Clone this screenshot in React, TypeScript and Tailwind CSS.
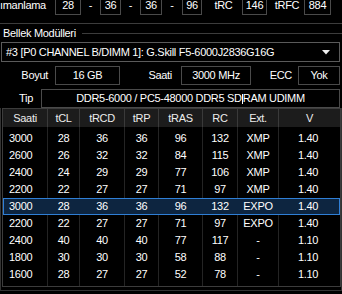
import React from "react";

const font = { fontFamily: '"Liberation Sans", Arial, sans-serif' };

function Box({ w, children, className = "" }: { w: string; children?: React.ReactNode; className?: string }) {
  return (
    <div className={`${w} border border-[#4a4a4a] flex items-center justify-center text-white ${className}`}>
      {children}
    </div>
  );
}

const cols = ["w-[45px]", "w-[32px]", "w-[45px]", "w-[34px]", "w-[44px]", "w-[35px]", "w-[41px]", "w-[61px]"];
const headers = ["Saati", "tCL", "tRCD", "tRP", "tRAS", "RC", "Ext.", "V"];
const rows: string[][] = [
  ["3000", "28", "36", "36", "96", "132", "XMP", "1.40"],
  ["2600", "26", "32", "32", "84", "115", "XMP", "1.40"],
  ["2400", "24", "29", "29", "77", "106", "XMP", "1.40"],
  ["2200", "22", "27", "27", "71", "97", "XMP", "1.40"],
  ["3000", "28", "36", "36", "96", "132", "EXPO", "1.40"],
  ["2200", "22", "27", "27", "71", "97", "EXPO", "1.40"],
  ["2400", "40", "40", "40", "77", "117", "-", "1.10"],
  ["1800", "30", "30", "30", "58", "88", "-", "1.10"],
  ["1600", "28", "27", "27", "52", "78", "-", "1.10"],
];

export default function App() {
  return (
    <div
      className="w-[342px] h-[294px] bg-black text-white text-[11px] leading-none tracking-[-0.3px] overflow-hidden"
      style={font}
    >
      {/* timing row */}
      <div className="-mt-[4px] h-[19px] flex">
        <div className="w-[55px] flex items-center">ımanlama</div>
        <Box w="w-[26px]">28</Box>
        <div className="w-[19px] flex items-center justify-center">-</div>
        <Box w="w-[21px]">36</Box>
        <div className="w-[19px] flex items-center justify-center">-</div>
        <Box w="w-[22px]">36</Box>
        <div className="w-[20px] flex items-center justify-center">-</div>
        <Box w="w-[20px]">96</Box>
        <div className="w-[40px] flex items-center justify-center pl-[3px]">tRC</div>
        <Box w="w-[25px]">146</Box>
        <div className="w-[37px] flex items-center justify-center pl-[3px]">tRFC</div>
        <Box w="w-[27px]">884</Box>
      </div>
      <div className="mt-[8px] h-px bg-[#3c3c3c]" />

      {/* group label */}
      <div className="h-[18px] flex items-center">
        <span className="pl-[3px]">Bellek Modülleri</span>
        <div className="flex-1 ml-[6px] h-px bg-[#3c3c3c]" />
      </div>

      {/* dropdown */}
      <div className="ml-[1px] w-[339px] h-[20px] border border-[#5a5a5a] flex items-center justify-between pl-[4px] pr-[9px]">
        <span>#3 [P0 CHANNEL B/DIMM 1]: G.Skill F5-6000J2836G16G</span>
        <svg width="8" height="5" viewBox="0 0 8 5">
          <polygon points="0,0 8,0 4,4.5" fill="#f0f0f0" />
        </svg>
      </div>

      {/* Boyut row */}
      <div className="mt-[4px] h-[19px] flex">
        <div className="w-[55px] flex items-center justify-end pr-[7px]">Boyut</div>
        <Box w="w-[65px]">16 GB</Box>
        <div className="w-[61px] flex items-center justify-end pr-[9px]">Saati</div>
        <Box w="w-[70px]">3000 MHz</Box>
        <div className="w-[47px] flex items-center justify-end pr-[6px]">ECC</div>
        <Box w="w-[42px]">Yok</Box>
      </div>

      {/* Tip row */}
      <div className="mt-[4px] h-[19px] flex">
        <div className="w-[41px] flex items-center justify-end pr-[8px]">Tip</div>
        <Box w="w-[299px]">
          <span className="flex items-center">
            DDR5-6000 / PC5-48000 DDR5 SD
            <span className="inline-block w-px h-[10px] bg-white" />
            RAM UDIMM
          </span>
        </Box>
      </div>

      {/* table frame */}
      <div className="w-[342px] border-x border-b border-[#333333] pb-[3px]">
        <div className="ml-[1px] w-[339px] border border-[#3c3c3c]">
          <div className="flex h-[18px] bg-[#1c1c1c]">
            {headers.map((h, i) => (
              <div
                key={h}
                className={`${cols[i]} flex items-center justify-center text-[#ececec] ${i < 7 ? "border-r border-[#3a3a3a]" : ""}`}
              >
                {h}
              </div>
            ))}
          </div>
          <div className="flex h-[3px]">
            {cols.map((c, i) => (
              <div key={i} className={`${c} ${i < 7 ? "border-r border-[#242424]" : ""}`} />
            ))}
          </div>
          {rows.map((r, ri) => {
            const sel = ri === 4;
            return (
              <div
                key={ri}
                className={`flex h-[17px] ${sel ? "bg-[#0d2540] outline outline-1 -outline-offset-1 outline-[#2f7fd6]" : ""}`}
              >
                {r.map((v, i) => (
                  <div
                    key={i}
                    className={`${cols[i]} flex items-center ${i === 0 ? "justify-start pl-[6px]" : "justify-center"} ${
                      i < 7 ? (sel ? "border-r border-transparent" : "border-r border-[#242424]") : ""
                    } ${i === 7 ? "pr-[3px]" : ""}`}
                  >
                    {v}
                  </div>
                ))}
              </div>
            );
          })}
          <div className="flex h-[3px]">
            {cols.map((c, i) => (
              <div key={i} className={`${c} ${i < 7 ? "border-r border-[#242424]" : ""}`} />
            ))}
          </div>
        </div>
      </div>
    </div>
  );
}
